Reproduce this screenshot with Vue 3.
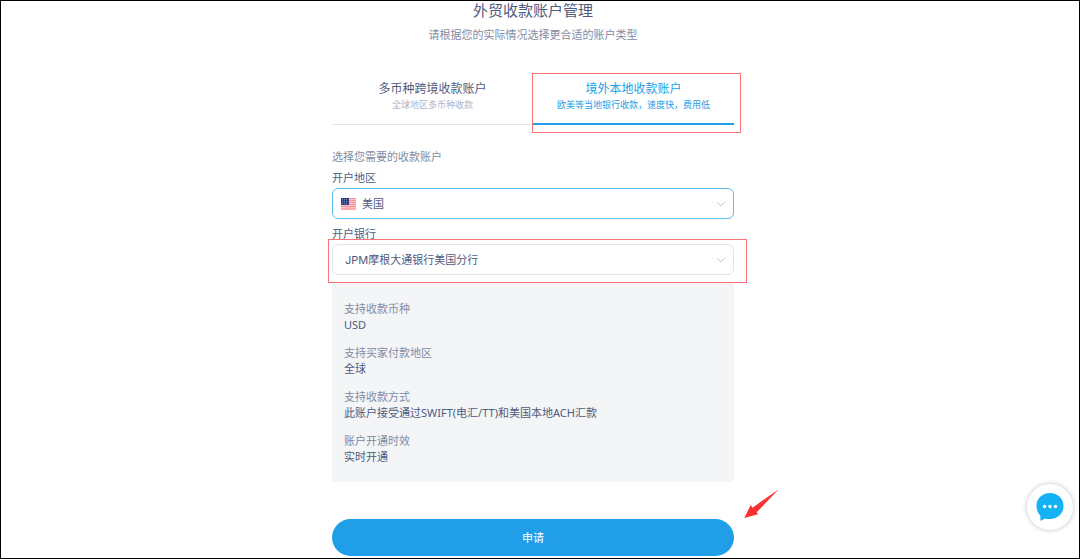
<script setup>
import { ref } from 'vue'

const tabs = [
  { id: 'multi', title: '多币种跨境收款账户', note: '全球地区多币种收款' },
  { id: 'local', title: '境外本地收款账户', note: '欧美等当地银行收款，速度快，费用低' }
]
const activeTab = ref('local')
const region = ref('US')
const bank = ref('JPM')

const details = [
  { label: '支持收款币种', value: 'USD' },
  { label: '支持买家付款地区', value: '全球' },
  { label: '支持收款方式', value: '此账户接受通过SWIFT(电汇/TT)和美国本地ACH汇款' },
  { label: '账户开通时效', value: '实时开通' }
]
</script>

<template>
  <div class="page">
    <main class="column">
      <h1>外贸收款账户管理</h1>
      <p class="subtitle">请根据您的实际情况选择更合适的账户类型</p>

      <div class="tabs" role="tablist">
        <button
          v-for="tab in tabs"
          :key="tab.id"
          type="button"
          role="tab"
          class="tab"
          :class="{ active: tab.id === activeTab, marked: tab.id === 'local' }"
          :aria-selected="tab.id === activeTab"
          @click="activeTab = tab.id"
        >
          <span class="tab-title">{{ tab.title }}</span>
          <span class="tab-note">{{ tab.note }}</span>
        </button>
      </div>

      <form @submit.prevent>
        <p class="hint">选择您需要的收款账户</p>

        <label for="region">开户地区</label>
        <div class="field">
          <svg class="flag" viewBox="0 0 15 12" aria-hidden="true">
            <rect width="15" height="12" fill="#ffc4c8" />
            <path d="M0 .5h15M0 2.5h15M0 4.5h15M0 6.5h15M0 8.5h15M0 11h15" stroke="#fb8f96" stroke-width="1" />
            <rect width="8" height="7" fill="#2c3f80" />
            <path d="M1 1.5h6M1 3.5h6M1 5.5h6" stroke="#7483b4" stroke-width="1" stroke-dasharray="1 1" />
          </svg>
          <select id="region" v-model="region" class="with-flag focused">
            <option value="US">美国</option>
          </select>
          <svg class="chevron" viewBox="0 0 10 6" aria-hidden="true"><path d="M1 1l4 4 4-4" /></svg>
        </div>

        <label for="bank">开户银行</label>
        <div class="field marked">
          <select id="bank" v-model="bank">
            <option value="JPM">JPM摩根大通银行美国分行</option>
          </select>
          <svg class="chevron" viewBox="0 0 10 6" aria-hidden="true"><path d="M1 1l4 4 4-4" /></svg>
        </div>

        <dl class="details">
          <div v-for="item in details" :key="item.label">
            <dt>{{ item.label }}</dt>
            <dd>{{ item.value }}</dd>
          </div>
        </dl>

        <div class="actions">
          <button type="submit" class="apply">申请</button>
          <svg class="arrow" viewBox="0 0 36 30" aria-hidden="true">
            <path d="M34.700 .3L12.700 23.300L14 25.300L.3 29L6.700 16L8.500 18.700Z" fill="#fb3030" />
          </svg>
        </div>
      </form>
    </main>

    <button type="button" class="chat" aria-label="在线客服">
      <svg viewBox="0 0 28 28" aria-hidden="true">
        <path d="M14 0C21.800 0 27.500 5.600 27.500 13S21.800 26 14 26C12.200 26 10.600 25.800 9 25.400L4.500 28L4.300 22.500C1.800 20 .5 16.800 .5 13C.5 5.600 6.200 0 14 0Z" fill="#14b1f5" />
        <circle cx="8.500" cy="13.500" r="1.700" fill="#fff" />
        <circle cx="14" cy="13.500" r="1.700" fill="#fff" />
        <circle cx="19.500" cy="13.500" r="1.700" fill="#fff" />
      </svg>
    </button>
  </div>
</template>

<style>
body {
  margin: 0;
  background: #fff;
}
</style>

<style scoped>
.page {
  box-sizing: border-box;
  height: 100vh;
  padding: 0 14px 0 0;
  overflow: hidden;
  border: 1px solid #000;
  background: #fff;
  color: #4f5b80;
  font: 11px/16px "Noto Sans", "Noto Sans CJK SC", sans-serif;
}

.page * {
  box-sizing: border-box;
}

.column {
  width: 100%;
  max-width: 402px;
  margin: 0 auto;
}

h1,
p,
dl,
dd {
  margin: 0;
}

h1 {
  font-size: 15px;
  font-weight: 400;
  line-height: 18px;
  text-align: center;
}

.subtitle {
  margin-top: 8px;
  color: #828ba3;
  text-align: center;
}

button,
select {
  border: 0;
  background: none;
  color: inherit;
  font: inherit;
}

.tabs {
  display: grid;
  grid-template-columns: 1fr 1fr;
  margin-top: 30px;
}

.tab {
  position: relative;
  display: flex;
  flex-direction: column;
  align-items: center;
  height: 52px;
  padding: 8px 0 0;
  border-bottom: 1px solid #e3e4e8;
}

.tab.active {
  border-bottom: 2px solid #209fe8;
  color: #209fe8;
}

.tab-title {
  font-size: 12px;
}

.tab-note {
  color: #b0b6c5;
  font-size: 9px;
}

.tab.active .tab-note {
  color: inherit;
}

.marked {
  position: relative;
}

.marked::after {
  position: absolute;
  border: 1px solid #fb7474;
  content: "";
  pointer-events: none;
}

.tab.marked::after {
  inset: 0 -7px -10px -1px;
}

.field.marked::after {
  inset: -5px -13px -8px -4px;
}

.hint {
  margin-top: 24px;
  color: #828ba3;
}

label {
  display: block;
  margin-top: 5px;
}

.field {
  position: relative;
  margin-top: 2px;
}

.field + label {
  margin-top: 7px;
}

select {
  display: block;
  width: 100%;
  height: 31px;
  padding: 0 30px 0 12px;
  border: 1px solid #e3e4ea;
  border-radius: 6px;
  appearance: none;
  background: #fff;
  font-family: Inter, "Noto Sans CJK SC", sans-serif;
}

select.with-flag {
  padding-left: 29px;
}

select.focused {
  border-color: #5fbdf0;
}

.flag {
  position: absolute;
  top: 10px;
  left: 9px;
  width: 15px;
  height: 12px;
}

.chevron {
  position: absolute;
  top: 13px;
  right: 8px;
  width: 10px;
  height: 6px;
  fill: none;
  stroke: #c3c7d2;
  pointer-events: none;
}

.details {
  display: grid;
  gap: 12px;
  margin-top: 8px;
  padding: 18px 12px 17px;
  border-radius: 4px;
  background: #f4f5f7;
}

dt {
  color: #828ba3;
}

.actions {
  position: relative;
  margin-top: 37px;
}

.apply {
  display: block;
  width: 100%;
  height: 37px;
  border-radius: 19px;
  background: #209fe8;
  color: #fff;
}

.arrow {
  position: absolute;
  top: -30px;
  right: -46px;
  width: 36px;
  height: 30px;
}

.chat {
  position: fixed;
  right: 7px;
  bottom: 29px;
  display: grid;
  place-items: center;
  width: 46px;
  height: 46px;
  padding: 0;
  border-radius: 50%;
  background: #fff;
  box-shadow: 0 0 5px rgba(0, 0, 0, 0.25);
}

.chat svg {
  width: 28px;
  height: 28px;
}
</style>
